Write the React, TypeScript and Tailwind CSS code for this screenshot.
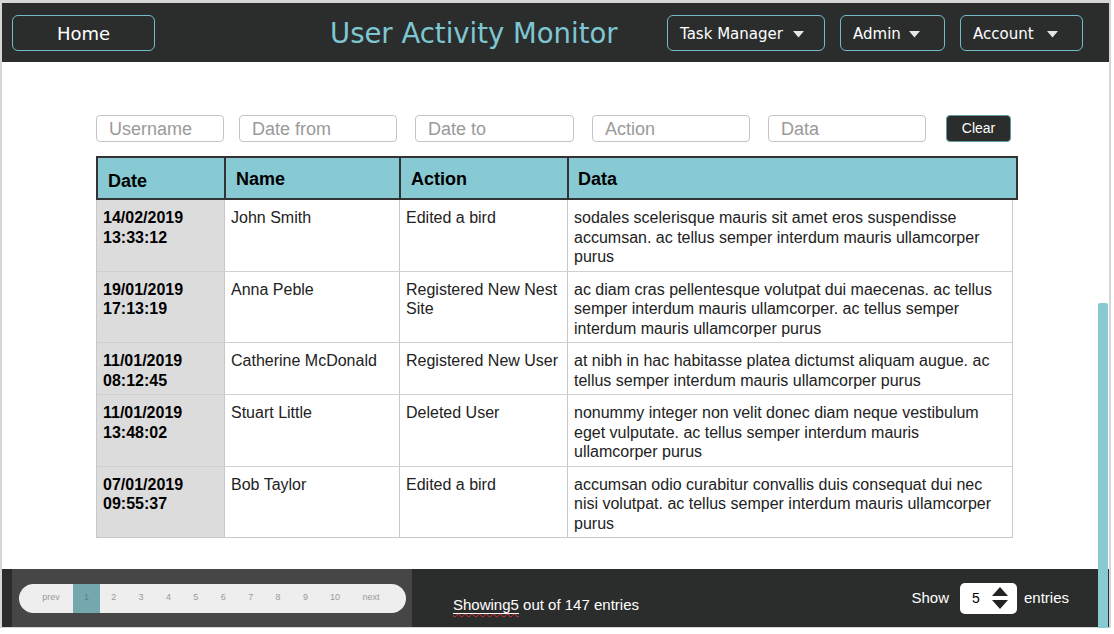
import React from "react";

const rows = [
  {
    d: "14/02/2019",
    t: "13:33:12",
    name: "John Smith",
    action: "Edited a bird",
    data: "sodales scelerisque mauris sit amet eros suspendisse accumsan. ac tellus semper interdum mauris ullamcorper purus",
  },
  {
    d: "19/01/2019",
    t: "17:13:19",
    name: "Anna Peble",
    action: "Registered New Nest Site",
    data: "ac diam cras pellentesque volutpat dui maecenas. ac tellus semper interdum mauris ullamcorper. ac tellus semper interdum mauris ullamcorper purus",
  },
  {
    d: "11/01/2019",
    t: "08:12:45",
    name: "Catherine McDonald",
    action: "Registered New User",
    data: "at nibh in hac habitasse platea dictumst aliquam augue. ac tellus semper interdum mauris ullamcorper purus",
  },
  {
    d: "11/01/2019",
    t: "13:48:02",
    name: "Stuart Little",
    action: "Deleted User",
    data: "nonummy integer non velit donec diam neque vestibulum eget vulputate. ac tellus semper interdum mauris ullamcorper purus",
  },
  {
    d: "07/01/2019",
    t: "09:55:37",
    name: "Bob Taylor",
    action: "Edited a bird",
    data: "accumsan odio curabitur convallis duis consequat dui nec nisi volutpat. ac tellus semper interdum mauris ullamcorper purus",
  },
];

function Caret() {
  return (
    <svg width="11" height="7" viewBox="0 0 11 7" className="shrink-0">
      <polygon points="0,0 11,0 5.5,6.5" fill="#e6e6e6" />
    </svg>
  );
}

function NavBtn({ label, w, gap }: { label: string; w: string; gap: string }) {
  return (
    <div
      className={`${w} h-[36px] rounded-[6px] border border-[#72bcc7] flex items-center pl-[12px] pt-[3px] ${gap} text-white text-[15px]`}
    >
      <span>{label}</span>
      <Caret />
    </div>
  );
}

export default function App() {
  const font = { fontFamily: '"Liberation Sans", Arial, sans-serif' };
  const verdana = { fontFamily: '"DejaVu Sans", Verdana, sans-serif' };
  return (
    <div className="w-[1114px] h-[634px] bg-white relative overflow-hidden" style={font}>
      <div className="w-[1111px] h-[628px] border-l-2 border-t-[3px] border-r-2 border-b border-[#d6d6d6] flex flex-col">
        {/* Header */}
        <div className="h-[59px] shrink-0 bg-[#2b2d2d] flex items-center pl-[10px] pr-[26px]" style={verdana}>
          <div className="w-[143px] h-[36px] rounded-[6px] border border-[#72bcc7] flex items-center justify-center pt-[2px] text-white text-[18px]">
            Home
          </div>
          <div className="ml-[175px] text-[27.5px] text-[#7ec7d2] leading-none mt-[2px]">User Activity Monitor</div>
          <div className="ml-auto flex items-center gap-[15px]">
            <NavBtn label="Task Manager" w="w-[158px]" gap="gap-[10px]" />
            <NavBtn label="Admin" w="w-[105px]" gap="gap-[8px]" />
            <NavBtn label="Account" w="w-[123px]" gap="gap-[13px]" />
          </div>
        </div>

        {/* Main */}
        <div className="flex-1 bg-white pl-[94px] pt-[53px]">
          <div className="flex items-center h-[27px]">
            <div className="w-[128px] h-[27px] rounded-[4px] border border-[#c4c4c4] pl-[12px] pt-[2px] flex items-center text-[18px] text-[#9a9a9a]">
              Username
            </div>
            <div className="ml-[15px] w-[158px] h-[27px] rounded-[4px] border border-[#c4c4c4] pl-[12px] pt-[2px] flex items-center text-[18px] text-[#9a9a9a]">
              Date from
            </div>
            <div className="ml-[18px] w-[159px] h-[27px] rounded-[4px] border border-[#c4c4c4] pl-[12px] pt-[2px] flex items-center text-[18px] text-[#9a9a9a]">
              Date to
            </div>
            <div className="ml-[18px] w-[158px] h-[27px] rounded-[4px] border border-[#c4c4c4] pl-[12px] pt-[2px] flex items-center text-[18px] text-[#9a9a9a]">
              Action
            </div>
            <div className="ml-[18px] w-[158px] h-[27px] rounded-[4px] border border-[#c4c4c4] pl-[12px] pt-[2px] flex items-center text-[18px] text-[#9a9a9a]">
              Data
            </div>
            <div className="ml-[20px] w-[65px] h-[27px] rounded-[4px] border border-[#5f9aa2] bg-[#2b2d2d] flex items-center justify-center text-white text-[14px]">
              Clear
            </div>
          </div>

          {/* Table header */}
          <div className="mt-[14px] w-[922px] h-[44px] grid grid-cols-[128px_175px_168px_1fr] bg-[#87cad4] border-2 border-[#333] text-[18px] font-bold text-black">
            <div className="pl-[10px] pt-[10px] border-r-2 border-[#333]">Date</div>
            <div className="pl-[10px] pt-[8px] border-r-2 border-[#333]">Name</div>
            <div className="pl-[10px] pt-[8px] border-r-2 border-[#333]">Action</div>
            <div className="pl-[9px] pt-[8px]">Data</div>
          </div>

          {/* Table body */}
          <div className="w-[917px] border-l border-r border-b border-[#c8c8c8] text-[16px] leading-[19.5px] text-[#222]">
            {rows.map((r, i) => (
              <div
                key={i}
                className={`grid grid-cols-[127px_175px_168px_1fr] ${i > 0 ? "border-t border-[#cfcfcf]" : ""}`}
              >
                <div className="bg-[#dcdcdc] font-bold text-black pl-[6px] pt-[8px] pb-[4px]">
                  <div>{r.d}</div>
                  <div>{r.t}</div>
                </div>
                <div className="border-l border-[#c8c8c8] pl-[6px] pt-[8px] pb-[4px]">{r.name}</div>
                <div className="border-l border-[#c8c8c8] pl-[6px] pr-[4px] pt-[8px] pb-[4px]">{r.action}</div>
                <div className="border-l border-[#c8c8c8] pl-[6px] pr-[10px] pt-[8px] pb-[4px]">{r.data}</div>
              </div>
            ))}
          </div>
        </div>

        {/* Footer */}
        <div className="h-[58px] shrink-0 flex">
          <div className="w-[10px] bg-[#2b2d2d]" />
          <div className="w-[400px] bg-[#464646] flex items-center pl-[7px]">
            <div className="w-[387px] h-[29px] rounded-full bg-[#eeeeee] flex items-stretch text-[9px] text-[#9a9a9a] overflow-hidden">
              <div className="w-[54px] flex items-center justify-center pl-[10px]">prev</div>
              <div className="w-[27px] bg-[#74a7ae] flex items-center justify-center text-[#5d7f84]">1</div>
              {["2", "3", "4", "5", "6", "7", "8", "9"].map((n) => (
                <div key={n} className="w-[27.4px] flex items-center justify-center">
                  {n}
                </div>
              ))}
              <div className="w-[32px] flex items-center justify-center">10</div>
              <div className="w-[44px] flex items-center justify-center pr-[4px]">next</div>
            </div>
          </div>
          <div className="flex-1 bg-[#2b2d2d] flex items-center text-white">
            <div className="ml-[41px] mt-[14px] text-[15px]">
              <span className="underline decoration-wavy decoration-[#e03030] decoration-1 underline-offset-[3px] border-b border-white">
                Showing5
              </span>{" "}
              out of 147 entries
            </div>
            <div className="ml-auto mr-[40px] flex items-center text-[15px]">
              <span>Show</span>
              <div className="ml-[11px] w-[57px] h-[31px] rounded-[5px] bg-white flex items-center pl-[12px] text-black text-[14px]">
                <span>5</span>
                <svg width="16" height="26" viewBox="0 0 16 26" className="ml-[12px]">
                  <polygon points="8,2 16,11 0,11" fill="#222" />
                  <polygon points="0,15 16,15 8,24" fill="#222" />
                </svg>
              </div>
              <span className="ml-[7px]">entries</span>
            </div>
          </div>
        </div>
      </div>
      {/* scrollbar */}
      <div className="absolute left-[1098px] top-[303px] w-[10px] h-[325px] bg-[#87cad4] rounded-t-[2px]" />
    </div>
  );
}
